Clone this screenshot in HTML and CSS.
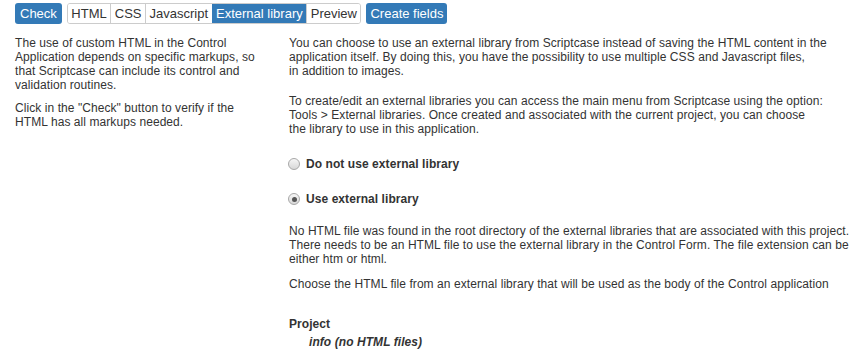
FILE: index.html
```html
<!DOCTYPE html>
<html lang="en">
<head>
    <meta charset="UTF-8">
    <meta name="viewport" content="width=device-width, initial-scale=1.0">
    <title>Control HTML</title>
    <link rel="stylesheet" href="styles.css">
</head>
<body>
    <div class="toolbar">
        <button class="btn btn-primary">Check</button>
        <div class="btn-group">
            <button class="btn">HTML</button>
            <button class="btn">CSS</button>
            <button class="btn">Javascript</button>
            <button class="btn active">External library</button>
            <button class="btn">Preview</button>
        </div>
        <button class="btn btn-primary btn-wide">Create fields</button>
    </div>

    <div class="content-area">
        <div class="help-column">
            <p>The use of custom HTML in the Control Application depends on specific markups, so that Scriptcase can include its control and validation routines.</p>
            <p>Click in the "Check" button to verify if the HTML has all markups needed.</p>
        </div>

        <div class="main-column">
            <p>You can choose to use an external library from Scriptcase instead of saving the HTML content in the<br>application itself. By doing this, you have the possibility to use multiple CSS and Javascript files,<br>in addition to images.</p>
            <p class="gap">To create/edit an external libraries you can access the main menu from Scriptcase using the option:<br>Tools &gt; External libraries. Once created and associated with the current project, you can choose<br>the library to use in this application.</p>

            <label class="radio-row">
                <span class="radio"></span>
                <span>Do not use external library</span>
            </label>
            <label class="radio-row">
                <span class="radio checked"></span>
                <span>Use external library</span>
            </label>

            <p class="notice">No HTML file was found in the root directory of the external libraries that are associated with this project.<br>There needs to be an HTML file to use the external library in the Control Form. The file extension can be<br>either htm or html.</p>
            <p class="small-gap">Choose the HTML file from an external library that will be used as the body of the Control application</p>

            <div class="project">
                <div class="project-title">Project</div>
                <div class="project-item">info (no HTML files)</div>
            </div>
        </div>
    </div>
</body>
</html>
```

FILE: styles.css
```css
body {
    margin: 0;
    font-family: "Liberation Sans", Arial, sans-serif;
    font-size: 12px;
    letter-spacing: 0.07px;
    color: #333;
    background: #fff;
}

/* Toolbar */
.toolbar {
    display: flex;
    gap: 5px;
    padding: 3px 15px;
}

.btn-group {
    display: flex;
    border: 1px solid #ccc;
    border-radius: 3px;
    overflow: hidden;
}

.btn {
    font-family: inherit;
    font-size: 13px;
    letter-spacing: 0;
    height: 21px;
    padding: 0 3.5px;
    border: none;
    background: #fff;
    color: #333;
    border-left: 1px solid #ccc;
    cursor: pointer;
}

.btn-group .btn {
    height: 19px;
}

.btn-group .btn:first-child {
    border-left: none;
}

.btn.active {
    background: #337ab7;
    border-left-color: #337ab7;
    color: #fff;
}

.btn-primary {
    background: #337ab7;
    color: #fff;
    border: none;
    border-radius: 3px;
    padding: 0 5px;
}

.btn-primary.btn-wide {
    padding: 0 4px;
}

/* Content */
.content-area {
    display: flex;
    padding-left: 15px;
}

.help-column {
    width: 245px;
    flex-shrink: 0;
    margin-right: 29px;
}

.main-column {
    flex-grow: 1;
    white-space: nowrap;
}

.help-column p,
.main-column p {
    margin: 9px 0 0 0;
    line-height: 14px;
}

.main-column p.gap {
    margin-top: 16px;
}

.main-column p.notice {
    margin-top: 18px;
}

.main-column p.small-gap {
    margin-top: 11px;
}

.radio-row {
    display: flex;
    align-items: center;
    gap: 6px;
    height: 14px;
    margin-top: 21px;
    font-weight: bold;
}

.radio {
    width: 12px;
    height: 12px;
    border-radius: 50%;
    border: 1px solid #a8a8a8;
    background: linear-gradient(#f6f6f6, #d8d8d8);
    box-sizing: border-box;
    position: relative;
    margin-left: -1px;
}

.radio.checked::after {
    content: "";
    position: absolute;
    left: 2.5px;
    top: 2.5px;
    width: 5px;
    height: 5px;
    border-radius: 50%;
    background: #555;
}

.project {
    margin-top: 26px;
    font-weight: bold;
    line-height: 14px;
}

.project-item {
    font-style: italic;
    margin: 4px 0 0 20px;
}
```
